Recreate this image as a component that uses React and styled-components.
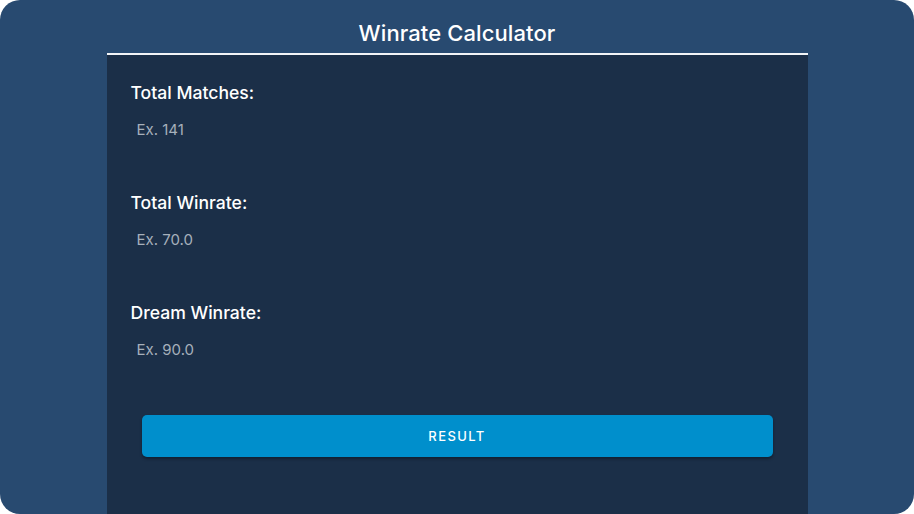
import styled, { createGlobalStyle } from "styled-components";

const GlobalStyle = createGlobalStyle`
  * { box-sizing: border-box; }
  html, body {
    margin: 0;
    padding: 0;
    background: #ffffff;
    font-family: "Inter", "Noto Sans", sans-serif;
  }
`;

const Screen = styled.div`
  width: 914px;
  height: 514px;
  border-radius: 20px;
  background-color: #284a70;
  display: flex;
  flex-direction: column;
  align-items: center;
  overflow: hidden;
`;

const Header = styled.header`
  width: 701px;
  height: 53px;
  display: flex;
  align-items: flex-end;
  justify-content: center;
  padding-bottom: 7px;

  h1 {
    margin: 0;
    font-size: 22px;
    line-height: 26px;
    font-weight: 500;
    color: #ffffff;
    letter-spacing: 0.1px;
  }
`;

const Panel = styled.main`
  width: 701px;
  flex: 1;
  background-color: #1b2f48;
  border-top: 2px solid #f2f4f7;
  padding: 27px 24px 0;
  display: flex;
  flex-direction: column;
`;

const Field = styled.div`
  display: flex;
  flex-direction: column;
  gap: 7px;
  margin-bottom: 45px;

  &:last-of-type {
    margin-bottom: 48px;
  }
`;

const Label = styled.label`
  font-size: 17.6px;
  line-height: 22px;
  font-weight: 500;
  color: #ffffff;
`;

const Input = styled.input`
  all: unset;
  height: 36px;
  padding: 0 6px;
  font-family: "Inter", "Noto Sans", sans-serif;
  font-size: 15px;
  color: #ffffff;

  &::placeholder {
    color: #a6b0bb;
  }
`;

const Button = styled.button`
  margin: 0 11px;
  height: 42px;
  border: none;
  border-radius: 5px;
  background-color: #008fcc;
  box-shadow: 0 2px 3px rgba(0, 0, 0, 0.35);
  color: #ffffff;
  font-family: "Inter", "Noto Sans", sans-serif;
  font-size: 13px;
  font-weight: 500;
  letter-spacing: 1.4px;
  cursor: pointer;
`;

const fields = [
  { id: "matches", label: "Total Matches:", placeholder: "Ex. 141" },
  { id: "winrate", label: "Total Winrate:", placeholder: "Ex. 70.0" },
  { id: "dream", label: "Dream Winrate:", placeholder: "Ex. 90.0" },
];

const App = () => {
  return (
    <>
      <GlobalStyle />
      <Screen>
        <Header>
          <h1>Winrate Calculator</h1>
        </Header>
        <Panel>
          {fields.map((f) => (
            <Field key={f.id}>
              <Label htmlFor={f.id}>{f.label}</Label>
              <Input id={f.id} type="text" placeholder={f.placeholder} />
            </Field>
          ))}
          <Button>RESULT</Button>
        </Panel>
      </Screen>
    </>
  );
};

export default App;
